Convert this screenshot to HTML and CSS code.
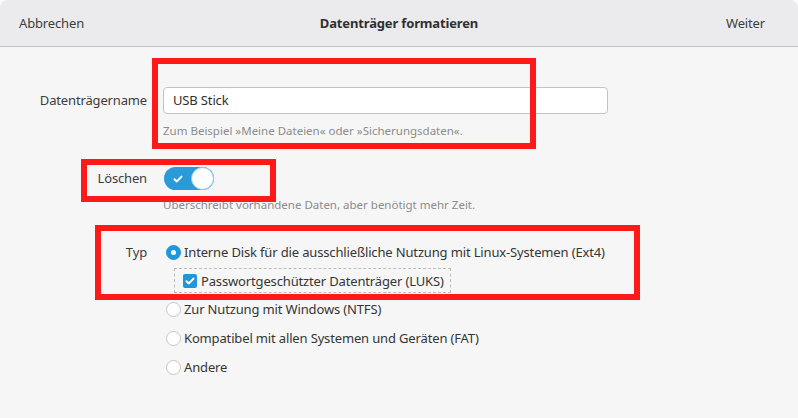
FILE: index.html
```html
<!DOCTYPE html>
<html lang="de">
<head>
<meta charset="utf-8">
<title>Datenträger formatieren</title>
<link rel="stylesheet" href="styles.css">
</head>
<body>
<div class="window">
  <header class="bar">
    <span class="bar-btn left">Abbrechen</span>
    <h1 class="bar-title">Datenträger formatieren</h1>
    <span class="bar-btn right">Weiter</span>
  </header>
  <main class="form">
    <label class="lbl lbl-name">Datenträgername</label>
    <div class="field">
      <div class="entry">USB Stick</div>
      <div class="hint hint-name">Zum Beispiel »Meine Dateien« oder »Sicherungsdaten«.</div>
    </div>

    <label class="lbl lbl-erase">Löschen</label>
    <div class="field">
      <div class="switch">
        <svg class="switch-check" width="10" height="8" viewBox="0 0 10 8"><path d="M1.5 4.2 L3.9 6.4 L8.5 1.6" fill="none" stroke="#fff" stroke-width="2" stroke-linecap="round" stroke-linejoin="round"/></svg>
        <span class="knob"></span>
      </div>
      <div class="hint hint-erase">Überschreibt vorhandene Daten, aber benötigt mehr Zeit.</div>
    </div>

    <label class="lbl lbl-type">Typ</label>
    <div class="field options">
      <div class="opt"><span class="radio on"></span>Interne Disk für die ausschließliche Nutzung mit Linux-Systemen (Ext4)</div>
      <div class="sub"><span class="check"><svg width="10" height="8" viewBox="0 0 10 8"><path d="M1.5 4.2 L3.9 6.4 L8.5 1.6" fill="none" stroke="#fff" stroke-width="2" stroke-linecap="round" stroke-linejoin="round"/></svg></span>Passwortgeschützter Datenträger (LUKS)</div>
      <div class="opt"><span class="radio"></span>Zur Nutzung mit Windows (NTFS)</div>
      <div class="opt"><span class="radio"></span>Kompatibel mit allen Systemen und Geräten (FAT)</div>
      <div class="opt"><span class="radio"></span>Andere</div>
    </div>
  </main>
  <div class="mark mark-1"></div>
  <div class="mark mark-2"></div>
  <div class="mark mark-3"></div>
</div>
</body>
</html>
```
FILE: styles.css
```css
html, body {
  margin: 0;
  padding: 0;
  background: #fbfbfb;
}
body {
  font-family: "Noto Sans", "Open Sans", sans-serif;
  font-size: 13px;
  letter-spacing: -0.15px;
  color: #3c3c3c;
}
.window {
  position: relative;
  width: 798px;
  height: 418px;
  background: #f6f6f6;
  border-radius: 8px 8px 0 0;
  overflow: hidden;
}
.bar {
  height: 46px;
  background: #ebebed;
  border-bottom: 1px solid #c4c4c6;
  display: grid;
  grid-template-columns: 1fr auto 1fr;
  align-items: center;
  padding: 0 19px;
}
.bar-btn {
  color: #3d3d3d;
}
.bar-btn.right {
  justify-self: end;
  margin-right: 14px;
}
.bar-title {
  margin: 0;
  font-size: 13px;
  font-weight: bold;
  text-align: center;
  color: #303030;
}
.form {
  display: grid;
  grid-template-columns: 147px 1fr;
  column-gap: 16px;
  padding-top: 40px;
}
.lbl {
  text-align: right;
  color: #3c3c3c;
}
.lbl-name { line-height: 27px; }
.lbl-erase { margin-top: 28px; line-height: 23px; }
.lbl-type { margin-top: 28px; line-height: 22px; }
.entry {
  box-sizing: border-box;
  width: 445px;
  height: 27px;
  background: #fff;
  border: 1px solid #c3c3c3;
  border-radius: 4px;
  padding-left: 9px;
  line-height: 25px;
  color: #303030;
}
.hint {
  font-size: 11.5px;
  letter-spacing: 0;
  color: #8c8c8c;
  line-height: 16px;
}
.hint-name { margin-top: 9px; }
.hint-erase { margin-top: 7px; }
.switch {
  margin-top: 28px;
  margin-left: 1px;
  position: relative;
  width: 50px;
  height: 23px;
  border-radius: 12px;
  background: #2a9ad9;
}
.switch-check {
  position: absolute;
  left: 9px;
  top: 8px;
}
.knob {
  position: absolute;
  right: 0;
  top: 0;
  box-sizing: border-box;
  width: 23px;
  height: 23px;
  border-radius: 50%;
  background: #fff;
  border: 1px solid #8ccbee;
}
.options {
  margin-top: 28px;
  display: flex;
  flex-direction: column;
}
.opt {
  display: flex;
  align-items: center;
  line-height: 22px;
  color: #353535;
  margin-bottom: 7px;
}
.opt:first-child { margin-bottom: 5px; }
.radio {
  box-sizing: border-box;
  width: 15px;
  height: 15px;
  border-radius: 50%;
  border: 1px solid #c6c6c6;
  background: #fff;
  margin-right: 3px;
  margin-left: 3px;
  flex: none;
}
.radio.on {
  background: #1f97dd;
  border-color: #1f97dd;
  display: flex;
  align-items: center;
  justify-content: center;
}
.radio.on::after {
  content: "";
  width: 5px;
  height: 5px;
  border-radius: 50%;
  background: #fff;
}
.sub {
  align-self: flex-start;
  box-sizing: border-box;
  height: 25px;
  margin-left: 11px;
  margin-bottom: 5px;
  border: 1px dashed #bdbdbd;
  padding: 0 6px 0 8px;
  display: flex;
  align-items: center;
  color: #353535;
}
.check {
  width: 14px;
  height: 14px;
  border-radius: 2px;
  background: #1f97dd;
  margin-right: 4px;
  display: flex;
  align-items: center;
  justify-content: center;
}
.mark {
  position: absolute;
  border: 6px solid #ff1a1a;
  box-sizing: border-box;
}
.mark-1 { left: 152px; top: 58px; width: 384px; height: 91px; }
.mark-2 { left: 81px; top: 159px; width: 195px; height: 43px; }
.mark-3 { left: 95px; top: 225px; width: 545px; height: 75px; }
```
